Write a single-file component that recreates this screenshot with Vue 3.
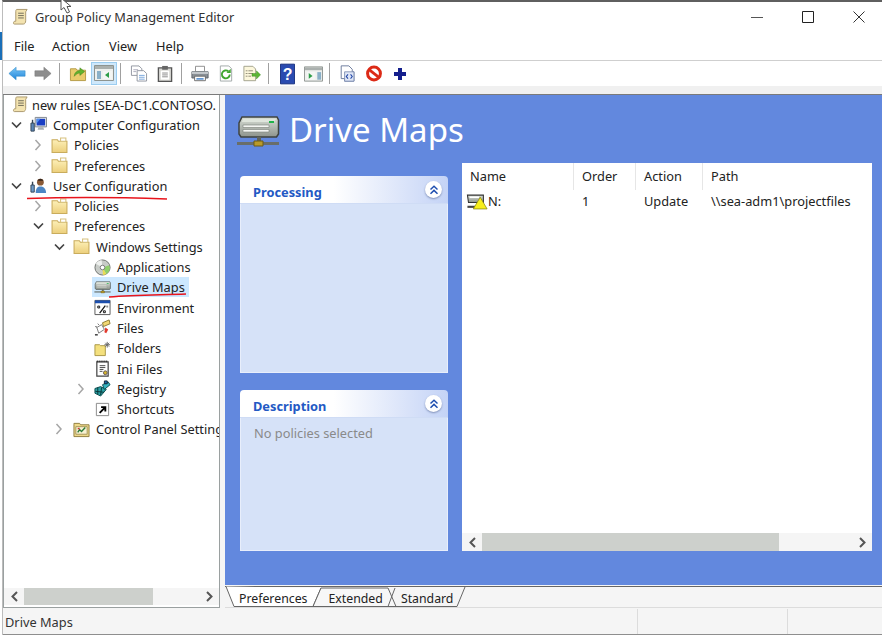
<script setup>
const toolbar = [
  ['back'], ['forward'], 'sep', ['up'], ['tree', true], 'sep', ['copy'], ['paste'], 'sep',
  ['print'], ['refresh'], ['export'], 'sep', ['help'], ['pane'], 'sep', ['xmlfile'], ['stop'], ['plus']
]
const tree = [
  { d: 0, t: 'new rules [SEA-DC1.CONTOSO.', i: 'scroll', c: '' },
  { d: 1, t: 'Computer Configuration', i: 'computer', c: 'open' },
  { d: 2, t: 'Policies', i: 'folder', c: 'closed' },
  { d: 2, t: 'Preferences', i: 'folder', c: 'closed' },
  { d: 1, t: 'User Configuration', i: 'user', c: 'open' },
  { d: 2, t: 'Policies', i: 'folder', c: 'closed' },
  { d: 2, t: 'Preferences', i: 'folder', c: 'open' },
  { d: 3, t: 'Windows Settings', i: 'folder', c: 'open' },
  { d: 4, t: 'Applications', i: 'cd', c: '' },
  { d: 4, t: 'Drive Maps', i: 'drive', c: '', sel: true },
  { d: 4, t: 'Environment', i: 'env', c: '' },
  { d: 4, t: 'Files', i: 'files', c: '' },
  { d: 4, t: 'Folders', i: 'folders', c: '' },
  { d: 4, t: 'Ini Files', i: 'ini', c: '' },
  { d: 4, t: 'Registry', i: 'registry', c: 'closed' },
  { d: 4, t: 'Shortcuts', i: 'shortcut', c: '' },
  { d: 3, t: 'Control Panel Settings', i: 'cpanel', c: 'closed' }
]
const cols = [
  { t: 'Name', w: 112 },
  { t: 'Order', w: 62 },
  { t: 'Action', w: 67 },
  { t: 'Path', w: 169 }
]
</script>

<template>
  <div class="page">
    <svg class="defs" width="0" height="0">
      <defs>
        <linearGradient id="gBlue" x1="0" y1="0" x2="0" y2="1"><stop offset="0" stop-color="#7cc8f8"/><stop offset="1" stop-color="#1f84d8"/></linearGradient>
        <linearGradient id="gFolder" x1="0" y1="0" x2="0" y2="1"><stop offset="0" stop-color="#fdf0b8"/><stop offset="1" stop-color="#eccf7c"/></linearGradient>
        <linearGradient id="gDrive" x1="0" y1="0" x2="0" y2="1"><stop offset="0" stop-color="#d9dfd6"/><stop offset="1" stop-color="#8d938c"/></linearGradient>
        <symbol id="scroll" viewBox="0 0 18 18"><path d="M5 1h11l-1.500 2.500V13c0 2-1 3.500-2.500 3.500H2.500C1.500 16.500 1 15 2.500 13.500H4V3c0-1 .4-2 1-2z" fill="#f3e3b0" stroke="#a8966a"/><path d="M6.500 5h6M6.500 7.500h6M6.500 10h6" stroke="#6f6a58"/></symbol>
        <symbol id="folder" viewBox="0 0 16 16"><path d="M1 4V2.500h5L7 4h8v10.500H1z" fill="url(#gFolder)" stroke="#c9ac5c"/><path d="M9 1h5v3H9z" fill="#fff" stroke="#d8c27e"/></symbol>
        <symbol id="computer" viewBox="0 0 18 18"><path d="M5.500 1.500h12v10h-12z" fill="#dfe3e6" stroke="#7d858c"/><path d="M7 3h9v7H7z" fill="#1a3fc4"/><path d="M7 3h4l-4 5z" fill="#4d8ff0"/><path d="M9 12h5l1 2.500H8z" fill="#aab0b5"/><path d="M1 7.500h3.500v8.500H1z" fill="#5b87b8" stroke="#345"/><path d="M2.700 4v3.500" stroke="#345" stroke-width="1.500"/></symbol>
        <symbol id="user" viewBox="0 0 18 18"><path d="M6 17c0-5 2-7 5-7s6 2 6 7z" fill="#4c86c4"/><circle cx="11" cy="5.500" r="3.600" fill="#8a5a36"/><path d="M8 4c1-3 5-3 6 0z" fill="#33241a"/><path d="M1 8.500h3.500V16H1z" fill="#6b9ac9" stroke="#345"/><path d="M2.700 5v3.500" stroke="#345" stroke-width="1.500"/></symbol>
        <symbol id="drive" viewBox="0 0 44 34"><path d="M6 2h35l1.500 3v14l-2 3H5l-2-3V8z" fill="url(#gDrive)" stroke="#3f4340" stroke-width="1.500"/><path d="M7 4h33l-2 3H6z" fill="#dfe5dc"/><path d="M7 10h26v2.500H7zM7 14.500h26V17H7z" fill="#f4f6f2" stroke="#7a7f78" stroke-width=".6"/><path d="M33 6h5v2h-5z" fill="#1fb34a"/><path d="M1 28.500h42" stroke="#696e69" stroke-width="3"/><path d="M21 22h4v5h-4z" fill="#5f645f"/><path d="M18 26h9v5h-9z" fill="#b99a2a" stroke="#6a5a18"/></symbol>
        <symbol id="cd" viewBox="0 0 18 18"><circle cx="9" cy="9" r="8" fill="#c8ccc8" stroke="#6b6f6b"/><path d="M9 9L16 6.500A8 8 0 0 1 13 16z" fill="#8fcf6a"/><path d="M9 9L13 16A8 8 0 0 1 9.500 17z" fill="#e9dc54"/><path d="M9 9L2 5A8 8 0 0 1 8 1z" fill="#eef0ee"/><circle cx="9" cy="9" r="2.400" fill="#fff" stroke="#777"/></symbol>
        <symbol id="env" viewBox="0 0 18 18"><path d="M1 1.500h16v15H1z" fill="#fff" stroke="#555"/><path d="M1 1.500h16v3H1z" fill="#1c4fae"/><path d="M4 7.500h2v2H4zM10 12.500h2v2h-2z" fill="none" stroke="#111"/><path d="M12 7l-6 8" stroke="#111" stroke-width="1.300"/><path d="M13 7h2v2h-2z" fill="#8a8a8a"/></symbol>
        <symbol id="files" viewBox="0 0 18 18"><path d="M9 4l7-3 1 4-7 3z" fill="#f2d873" stroke="#8c7a30"/><path d="M3 9l5-3 3 5-6 4z" fill="#fff" stroke="#777"/><path d="M1 16h3v1.500H1z" fill="#333"/><path d="M12 9l3 2-2 4-2-1z" fill="#e23a2e"/><path d="M4 5l1 1M1.500 8l1.500.5" stroke="#333"/></symbol>
        <symbol id="folders" viewBox="0 0 18 18"><path d="M1 5h5l1 1h5v10.500H1z" fill="#f4e07e" stroke="#a99645"/><path d="M14 2v6M11 5h6M12 3l4 4M16 3l-4 4" stroke="#666"/></symbol>
        <symbol id="ini" viewBox="0 0 18 18"><path d="M3 2h12v15H3z" fill="#fff" stroke="#444" stroke-width="1.300"/><path d="M3 1.500h12" stroke="#222" stroke-dasharray="1 1" stroke-width="2"/><path d="M6 6h6M6 8h6M6 10h4M6 12h3" stroke="#444"/><circle cx="12" cy="13.500" r="2" fill="#d4b72c" stroke="#655"/></symbol>
        <symbol id="registry" viewBox="0 0 18 18"><path d="M1 9l6-2 6 3-6 7-6-3z" fill="#2ba0a4" stroke="#0b4a4c"/><path d="M4 8v7M8 8l-1 8M1.500 12l9 1" stroke="#073335"/><path d="M9 5l6-3 2 3-6 5z" fill="#38b4c0" stroke="#0b4a4c"/><path d="M11 1h3v3h-3z" fill="#1c6fb0" stroke="#123"/></symbol>
        <symbol id="shortcut" viewBox="0 0 18 18"><path d="M2.500 2.500h13v13h-13z" fill="#fff" stroke="#888"/><path d="M6 12.500L11 7.500M7.500 6.500H12V11" fill="none" stroke="#000" stroke-width="2"/></symbol>
        <symbol id="cpanel" viewBox="0 0 18 18"><path d="M1 4V2.500h6L8 4h9v12.500H1z" fill="#eed98a" stroke="#8e7c3e"/><path d="M3 6h12v8H3z" fill="#f7f1d2" stroke="#a5965a"/><path d="M5 12l2-3 2 2 4-4" fill="none" stroke="#2a7a38" stroke-width="1.500"/><path d="M5 8h2" stroke="#c33" stroke-width="1.500"/></symbol>
        <symbol id="warn" viewBox="0 0 20 16"><path d="M1 2h15v7H2z" fill="url(#gDrive)" stroke="#333"/><path d="M3 4h9" stroke="#fff" stroke-width="1.500"/><path d="M1 13h10" stroke="#444" stroke-width="2"/><path d="M13 4l6.500 11h-13z" fill="#f7ee1c" stroke="#8a8410" stroke-width=".7"/></symbol>

        <symbol id="back" viewBox="0 0 20 18"><path d="M1 9l8-7v4h10v6H9v4z" fill="url(#gBlue)" stroke="#2d88c8" stroke-width=".6"/></symbol>
        <symbol id="forward" viewBox="0 0 20 18"><path d="M19 9l-8-7v4H1v6h10v4z" fill="#8e8e8e" stroke="#777" stroke-width=".6"/></symbol>
        <symbol id="up" viewBox="0 0 18 18"><path d="M1 4h6l1 1.500h9v11H1z" fill="#eacb6c" stroke="#b59a44"/><path d="M5 12c0-4 3-6 6-6V3l5 4-5 4V8.500c-2 0-4 1-6 3.500z" fill="#63b32e" stroke="#3e7f1a" stroke-width=".5"/></symbol>
        <symbol id="tree" viewBox="0 0 20 16"><path d="M.5.500h19v15H.5z" fill="#eef0ee" stroke="#8e9490"/><path d="M1 1h18v3H1z" fill="#aab0ae"/><path d="M3 6h4v8H3z" fill="#8ab0c8"/><path d="M9 6h9v8H9z" fill="#f4f6f4"/><path d="M11 10l4-3v6z" fill="#2d9d48"/></symbol>
        <symbol id="copy" viewBox="0 0 18 18"><path d="M1 1h8l3 3v7H1z" fill="#fff" stroke="#9096a0"/><path d="M7 6h7l3 3v8H7z" fill="#fff" stroke="#9096a0"/><path d="M9 11h6M9 13h6M9 15h6" stroke="#77a6dc"/><path d="M3 5h5M3 7h3" stroke="#aab"/></symbol>
        <symbol id="paste" viewBox="0 0 18 18"><path d="M2 3h14v14.500H2z" fill="#d8d8d4" stroke="#555" stroke-width="1.400"/><path d="M6 1h6v4H6z" fill="#666"/><path d="M4.500 6h9v9.500h-9z" fill="#fff"/><path d="M6 8.500h6M6 10.500h6M6 12.500h6" stroke="#888"/></symbol>
        <symbol id="print" viewBox="0 0 20 18"><path d="M5 1h10v6H5z" fill="#fff" stroke="#888"/><path d="M1 7h18v7H1z" fill="#8a9096" stroke="#5a6066"/><path d="M1 7h18v2.500H1z" fill="#c4c9cc"/><path d="M4 12h12v5H4z" fill="#fff" stroke="#666"/><path d="M6 15h8" stroke="#3579c8" stroke-width="1.500"/></symbol>
        <symbol id="refresh" viewBox="0 0 18 18"><path d="M3 1h9l3 3v13H3z" fill="#fff" stroke="#a0a8a8"/><path d="M13 10a4.200 4.200 0 1 1-1.500-3.300" fill="none" stroke="#3fa52e" stroke-width="2"/><path d="M14 4v4.500H9.500z" fill="#3fa52e"/></symbol>
        <symbol id="export" viewBox="0 0 20 18"><path d="M1 1h10l3 3v13H1z" fill="#fcf7dc" stroke="#9d9d88"/><path d="M3 6h2M6 6h5M3 9h2M6 9h5M3 12h2M6 12h3" stroke="#8a8670"/><path d="M10 9h5V6l4.500 4.500L15 15v-3h-5z" fill="#5cb635" stroke="#3c8a1f" stroke-width=".5"/></symbol>
        <symbol id="help" viewBox="0 0 16 22"><path d="M.5.500h15v21H.5z" fill="#2a4bb0" stroke="#17307e"/><text x="8" y="17" text-anchor="middle" font-size="17" font-weight="700" font-family="Liberation Sans, sans-serif" fill="#fff">?</text></symbol>
        <symbol id="pane" viewBox="0 0 20 16"><path d="M.5.500h19v15H.5z" fill="#eef0ee" stroke="#8e9490"/><path d="M1 1h18v3H1z" fill="#aab0ae"/><path d="M3 6h9v8H3z" fill="#f4f6f4"/><path d="M14 6h4v8h-4z" fill="#8ab0c8"/><path d="M5 7l4 3-4 3z" fill="#2d9d48"/></symbol>
        <symbol id="xmlfile" viewBox="0 0 18 20"><path d="M1 1h9l4 4v3h2v11H5v-3H1z" fill="#fff" stroke="#5a6a90"/><path d="M5 8h11v11H5z" fill="#dfe6f6" stroke="#7a8ab0"/><path d="M9 11l-2 2.500 2 2.500M12 11l2 2.500-2 2.500" fill="none" stroke="#2348a8" stroke-width="1.300"/></symbol>
        <symbol id="stop" viewBox="0 0 18 18"><circle cx="9" cy="9" r="6.800" fill="#fff" stroke="#dc2a16" stroke-width="3.200"/><path d="M4.500 5.500l9 7" stroke="#dc2a16" stroke-width="3"/></symbol>
        <symbol id="plus" viewBox="0 0 12 12"><path d="M4 0h4v4h4v4H8v4H4V8H0V4h4z" fill="#141f8c"/></symbol>
        <symbol id="sl" viewBox="0 0 9 11"><path d="M7 1L2.500 5.500 7 10" fill="none" stroke="#555" stroke-width="2"/></symbol>
        <symbol id="sr" viewBox="0 0 9 11"><path d="M2 1l4.500 4.500L2 10" fill="none" stroke="#555" stroke-width="2"/></symbol>
      </defs>
    </svg>

    <div class="window">
      <header class="titlebar">
        <svg class="t-icon"><use href="#scroll" /></svg>
        <span class="t-text">Group Policy Management Editor</span>
        <div class="controls">
          <svg width="12" height="12" viewBox="0 0 12 12"><path d="M0 6.500h12" stroke="#555" stroke-width="1"/></svg>
          <svg width="12" height="12" viewBox="0 0 12 12"><path d="M.5.500h11v11H.5z" fill="none" stroke="#222"/></svg>
          <svg width="12" height="12" viewBox="0 0 12 12"><path d="M.5.500l11 11M11.500.500l-11 11" stroke="#333"/></svg>
        </div>
      </header>

      <nav class="menubar">
        <span>File</span><span>Action</span><span>View</span><span>Help</span>
      </nav>

      <div class="toolbar">
        <template v-for="(b, n) in toolbar" :key="n">
          <i v-if="b === 'sep'" class="sep"></i>
          <span v-else class="tool" :class="{ active: b[1] }">
            <svg class="tool-icon" :class="b[0]"><use :href="'#' + b[0]" /></svg>
          </span>
        </template>
      </div>
      <div class="strip"></div>

      <div class="main">
        <aside class="treepane">
          <div class="tree">
            <div v-for="(r, n) in tree" :key="n" class="row" :class="'d' + r.d">
              <span class="chev">
                <svg v-if="r.c === 'open'" width="11" height="8" viewBox="0 0 11 8"><path d="M1 1.500l4.500 4.500L10 1.500" fill="none" stroke="#444" stroke-width="1.700"/></svg>
                <svg v-if="r.c === 'closed'" width="8" height="12" viewBox="0 0 8 12"><path d="M1.500 1l4.500 5-4.500 5" fill="none" stroke="#a6a6a6" stroke-width="1.500"/></svg>
              </span>
              <span class="entry" :class="{ sel: r.sel }">
                <svg class="node-icon"><use :href="'#' + r.i" /></svg>
                <span class="label">{{ r.t }}</span>
              </span>
            </div>
          </div>
          <div class="hscroll tree-scroll">
            <span class="arrow"><svg width="9" height="11"><use href="#sl" /></svg></span>
            <div class="track"><div class="thumb"></div></div>
            <span class="arrow"><svg width="9" height="11"><use href="#sr" /></svg></span>
          </div>
        </aside>

        <section class="content">
          <div class="blue">
            <div class="hero">
              <svg class="hero-icon"><use href="#drive" /></svg>
              <h1>Drive Maps</h1>
            </div>
            <div class="body">
              <div class="side">
                <div class="card first">
                  <div class="card-head"><b>Processing</b><span class="collapse"><svg width="10" height="10" viewBox="0 0 10 10"><path d="M1.500 4.500L5 1.200l3.500 3.300M1.500 8.700L5 5.400l3.500 3.300" fill="none" stroke="#1f4fb0" stroke-width="1.500"/></svg></span></div>
                  <div class="card-body"></div>
                </div>
                <div class="card second">
                  <div class="card-head"><b>Description</b><span class="collapse"><svg width="10" height="10" viewBox="0 0 10 10"><path d="M1.500 4.500L5 1.200l3.500 3.300M1.500 8.700L5 5.400l3.500 3.300" fill="none" stroke="#1f4fb0" stroke-width="1.500"/></svg></span></div>
                  <div class="card-body">No policies selected</div>
                </div>
              </div>
              <div class="list">
                <div class="list-head">
                  <span v-for="c in cols" :key="c.t" :style="{ width: c.w + 'px' }">{{ c.t }}</span>
                </div>
                <div class="list-row">
                  <span class="c0" :style="{ width: cols[0].w + 'px' }"><svg class="warn"><use href="#warn" /></svg>N:</span>
                  <span :style="{ width: cols[1].w + 'px' }">1</span>
                  <span :style="{ width: cols[2].w + 'px' }">Update</span>
                  <span :style="{ width: cols[3].w + 'px' }">\\sea-adm1\projectfiles</span>
                </div>
                <div class="hscroll list-scroll">
                  <span class="arrow"><svg width="9" height="11"><use href="#sl" /></svg></span>
                  <div class="track"><div class="thumb"></div></div>
                  <span class="arrow"><svg width="9" height="11"><use href="#sr" /></svg></span>
                </div>
              </div>
            </div>
          </div>
          <div class="tabs">
            <svg class="tab-lines" width="657" height="23" viewBox="0 0 657 23">
              <path d="M0 1.500h657" stroke="#666"/>
              <path d="M1 1.500L9 21.500H88L96 3" fill="#fff" stroke="#666"/>
              <path d="M88 21.500L96 3H163L171 21.500z" fill="#f7f7f7" stroke="#666"/>
              <path d="M163 21.500L170 3M171 21.500H232L240 2" fill="none" stroke="#666"/>
            </svg>
            <span class="tab p">Preferences</span><span class="tab e">Extended</span><span class="tab s">Standard</span>
          </div>
        </section>
      </div>

      <footer class="status"><span class="st-main">Drive Maps</span><span class="st-cell"></span><span class="st-cell"></span></footer>
    </div>

    <svg class="marks" width="882" height="638" viewBox="0 0 882 638">
      <path d="M0 32h2v28H0z" fill="#1a6fb8"/>
      <path d="M27 198.500C70 197 110 197 167 199" fill="none" stroke="#e8141c" stroke-width="1.500"/>
      <path d="M109 297C135 295 160 295 186 294" fill="none" stroke="#e8141c" stroke-width="1.500"/>
      <path d="M61 -2V10L64 7.500 67 13 69.500 12 67 6.500H71z" fill="#fff" stroke="#555"/>
    </svg>
  </div>
</template>

<style>
html, body { margin: 0; background: #fff; }
</style>

<style scoped>
.page {
  position: relative;
  width: 882px;
  height: 638px;
  overflow: hidden;
  background: #fff;
  font: 12.8px/1 "Noto Sans", sans-serif;
  color: #222;
}
.defs { position: absolute; }
.marks { position: absolute; left: 0; top: 0; pointer-events: none; }
.window {
  height: 635px;
  margin-left: 2px;
  border-top: 2px solid #5f5f5f;
  border-left: 1px solid #bcbcbc;
  box-sizing: border-box;
  display: flex;
  flex-direction: column;
  background: #fff;
}
.titlebar { height: 30px; display: flex; align-items: center; flex: none; }
.t-icon { width: 17px; height: 18px; margin-left: 9px; }
.t-text { margin-left: 6px; color: #333; }
.controls { margin-left: auto; display: flex; gap: 39px; padding-right: 17px; }
.menubar {
  height: 28px;
  flex: none;
  display: flex;
  align-items: center;
  padding-left: 11px;
  border-bottom: 1px solid #cfcfcf;
  box-sizing: content-box;
}
.menubar span:nth-child(1) { width: 38px; }
.menubar span:nth-child(2) { width: 57px; }
.menubar span:nth-child(3) { width: 47px; }
.toolbar {
  height: 25px;
  flex: none;
  display: flex;
  align-items: center;
  padding-left: 1px;
}
.tool { width: 26px; height: 23px; display: flex; align-items: center; justify-content: center; box-sizing: border-box; flex: none; }
.tool.active { background: #cfe8fb; border: 1px solid #9ccdf0; }
.tool-icon { width: 18px; height: 17px; }
.tool-icon.plus { width: 12px; height: 12px; }
.tool-icon.help { width: 15px; height: 22px; }
.tool-icon.tree, .tool-icon.pane { width: 19px; height: 16px; }
.sep { width: 1px; height: 21px; background: #a0a0a0; margin: 0 5px 0 3px; flex: none; }
.strip { height: 8px; flex: none; background: #f0f0f0; border-bottom: 1px solid #7a7a7a; }
.main { flex: 1; min-height: 0; display: flex; background: #f5f5f5; }
.treepane {
  width: 217px;
  flex: none;
  box-sizing: border-box;
  background: #fff;
  border-right: 1px solid #9aa0a0;
  border-bottom: 1px solid #9aa0a0;
  border-left: 1px solid #9aa0a0;
  display: flex;
  flex-direction: column;
  overflow: hidden;
}
.tree { flex: 1; overflow: hidden; margin-top: -.5px; }
.row { height: 20.3px; display: flex; align-items: center; white-space: nowrap; }
.chev { width: 16px; flex: none; display: flex; justify-content: center; align-items: center; }
.d0 .chev { width: 6px; }
.d1 .chev { margin: 0 4px 0 4px; }
.d2 .chev { margin: 0 3px 0 26px; }
.d3 .chev { margin: 0 4px 0 47px; }
.d4 .chev { margin: 0 3px 0 69px; }
.entry { display: inline-flex; align-items: center; height: 20px; padding: 0 2px; }
.entry.sel { background: #cce8ff; padding-right: 4px; }
.node-icon { width: 17px; height: 17px; flex: none; margin-right: 6px; }
.d0 .node-icon { margin-right: 3px; }
.label { color: #222; line-height: 20px; }
.hscroll { display: flex; align-items: center; height: 17px; flex: none; background: #f5f5f5; }
.tree-scroll { margin: 0 0 2px; }
.arrow { width: 20px; height: 11px; display: flex; justify-content: center; flex: none; }
.track { flex: 1; height: 100%; }
.thumb { height: 100%; background: #cdd0cc; }
.tree-scroll .thumb { width: 129px; }
.content { flex: 1; display: flex; flex-direction: column; margin-left: 5px; min-width: 0; }
.blue { height: 490px; flex: none; background: #6288de; display: flex; flex-direction: column; }
.hero { height: 68px; flex: none; display: flex; align-items: center; padding-left: 10px; }
.hero-icon { width: 46px; height: 34px; margin-top: 5px; }
h1 { margin: 2px 0 0 8px; font: 400 33px/40px "Noto Sans", sans-serif; color: #fff; }
.body { flex: 1; min-height: 0; display: flex; padding: 0 10px 34px 15px; }
.side { width: 208px; flex: none; padding-top: 13px; display: flex; flex-direction: column; gap: 17px; }
.card { display: flex; flex-direction: column; }
.first { height: 197px; }
.second { flex: 1; }
.card-head {
  height: 28px;
  flex: none;
  box-sizing: border-box;
  display: flex;
  align-items: center;
  justify-content: space-between;
  padding: 0 6px 0 13px;
  border-radius: 4px 4px 0 0;
  background: linear-gradient(90deg, #fff 45%, #c4d3f6);
  border-bottom: 1px solid #cfdcf5;
}
.card-head b { color: #2359c4; font: 700 12.8px/1 "Noto Sans", sans-serif; margin-top: 5px; }
.collapse { width: 17px; height: 17px; border-radius: 50%; background: #fff; box-shadow: 0 1px 2px #7f8fb8; display: flex; align-items: center; justify-content: center; }
.card-body {
  flex: 1;
  background: #d6e2f8;
  border: 1px solid #e8eefb;
  border-top: 0;
  padding: 9px 13px;
  color: #8a8a8a;
}
.list { margin-left: 14px; flex: 1; min-width: 0; background: #fff; display: flex; flex-direction: column; }
.list-head { height: 27px; flex: none; display: flex; align-items: center; box-sizing: border-box; }
.list-head span { box-sizing: border-box; padding-left: 8px; height: 27px; line-height: 26px; border-right: 1px solid #e6e6e6; }
.list-head span:last-child { border: 0; }
.list-row { height: 22px; flex: 1; display: flex; align-items: flex-start; padding-top: 2px; }
.list-row span { box-sizing: border-box; padding-left: 8px; line-height: 18px; white-space: nowrap; }
.list-row .c0 { display: flex; align-items: center; padding-left: 4px; }
.warn { width: 22px; height: 17px; }
.list-scroll { height: 18px; }
.list-scroll .thumb { width: 297px; }
.tabs { position: relative; height: 23px; flex: none; display: flex; align-items: center; background: #f5f5f5; border-bottom: 1px solid #dcdcdc; box-sizing: border-box; font-size: 12.3px; padding-top: 6px; }
.tab-lines { position: absolute; left: 0; top: 0; }
.tab { position: relative; color: #222; }
.p { margin-left: 14px; }
.e { margin-left: 21px; }
.s { margin-left: 18px; }
.status {
  height: 27px;
  flex: none;
  box-sizing: border-box;
  display: flex;
  align-items: stretch;
  border-top: 1px solid #f5f5f5;
  border-bottom: 1px solid #8e8e8e;
  background: #f5f5f5;
  line-height: 27px;
  color: #333;
}
.st-main { width: 634px; flex: none; padding-left: 2px; box-sizing: border-box; }
.st-cell { width: 150px; flex: none; border-left: 1px solid #dcdcdc; box-sizing: border-box; }
</style>
